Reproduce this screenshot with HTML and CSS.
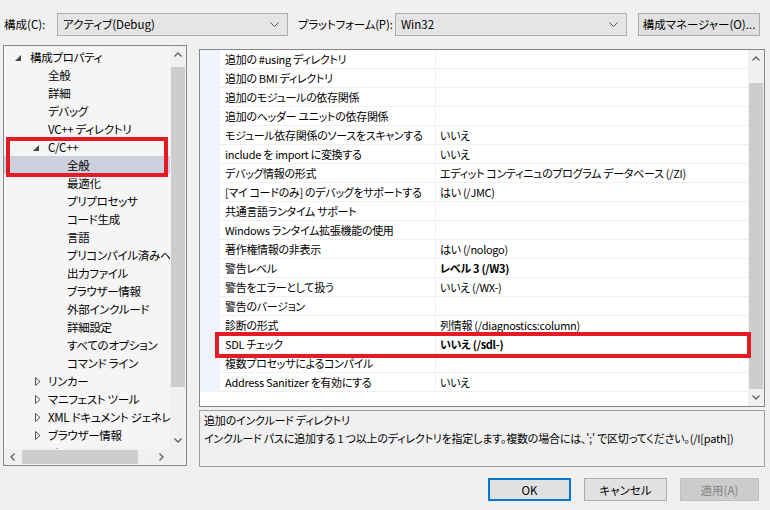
FILE: index.html
```html
<!DOCTYPE html>
<html lang="ja">
<head>
<meta charset="utf-8">
<link rel="stylesheet" href="styles.css">
</head>
<body>
<div class="dialog">
  <div class="topbar">
    <span class="lbl lbl-conf">構成(C):</span>
    <div class="combo combo-conf"><span>アクティブ(Debug)</span><svg class="chev" width="9" height="5" viewBox="0 0 9 5"><path d="M0.5 0.5 L4.5 4.5 L8.5 0.5" fill="none" stroke="#555" stroke-width="1"/></svg></div>
    <span class="lbl lbl-plat">プラットフォーム(P):</span>
    <div class="combo combo-plat"><span>Win32</span><svg class="chev" width="9" height="5" viewBox="0 0 9 5"><path d="M0.5 0.5 L4.5 4.5 L8.5 0.5" fill="none" stroke="#555" stroke-width="1"/></svg></div>
    <button class="btn btn-mgr">構成マネージャー(O)...</button>
  </div>

  <div class="main">
    <div class="tree">
      <div class="tree-body">
        <div class="ti l0"><svg class="exp" width="6" height="6" viewBox="0 0 6 6"><polygon points="6,0 6,6 0,6" fill="#444"/></svg>構成プロパティ</div>
        <div class="ti l1">全般</div>
        <div class="ti l1">詳細</div>
        <div class="ti l1">デバッグ</div>
        <div class="ti l1">VC++ ディレクトリ</div>
        <div class="ti l1"><svg class="exp" width="6" height="6" viewBox="0 0 6 6"><polygon points="6,0 6,6 0,6" fill="#444"/></svg>C/C++</div>
        <div class="ti l2 sel">全般</div>
        <div class="ti l2">最適化</div>
        <div class="ti l2">プリプロセッサ</div>
        <div class="ti l2">コード生成</div>
        <div class="ti l2">言語</div>
        <div class="ti l2">プリコンパイル済みヘッダー</div>
        <div class="ti l2">出力ファイル</div>
        <div class="ti l2">ブラウザー情報</div>
        <div class="ti l2">外部インクルード</div>
        <div class="ti l2">詳細設定</div>
        <div class="ti l2">すべてのオプション</div>
        <div class="ti l2">コマンド ライン</div>
        <div class="ti l1"><svg class="col" width="6" height="9" viewBox="0 0 6 9"><polygon points="0.5,0.5 5,4.5 0.5,8.5" fill="none" stroke="#555" stroke-width="1"/></svg>リンカー</div>
        <div class="ti l1"><svg class="col" width="6" height="9" viewBox="0 0 6 9"><polygon points="0.5,0.5 5,4.5 0.5,8.5" fill="none" stroke="#555" stroke-width="1"/></svg>マニフェスト ツール</div>
        <div class="ti l1"><svg class="col" width="6" height="9" viewBox="0 0 6 9"><polygon points="0.5,0.5 5,4.5 0.5,8.5" fill="none" stroke="#555" stroke-width="1"/></svg>XML ドキュメント ジェネレーター</div>
        <div class="ti l1"><svg class="col" width="6" height="9" viewBox="0 0 6 9"><polygon points="0.5,0.5 5,4.5 0.5,8.5" fill="none" stroke="#555" stroke-width="1"/></svg>ブラウザー情報</div>
        <div class="ti l1"><svg class="col" width="6" height="9" viewBox="0 0 6 9"><polygon points="0.5,0.5 5,4.5 0.5,8.5" fill="none" stroke="#555" stroke-width="1"/></svg>ビルド イベント</div>
      </div>
      <div class="vscroll">
        <div class="arrow"><svg width="8" height="5" viewBox="0 0 8 5"><path d="M0.5 4.5 L4 1 L7.5 4.5" fill="none" stroke="#606060" stroke-width="1.3"/></svg></div>
        <div class="track"><div class="thumb tree-vthumb"></div></div>
        <div class="arrow"><svg width="8" height="5" viewBox="0 0 8 5"><path d="M0.5 0.5 L4 4 L7.5 0.5" fill="none" stroke="#606060" stroke-width="1.3"/></svg></div>
      </div>
      <div class="hscroll">
        <div class="harrow"><svg width="5" height="8" viewBox="0 0 5 8"><path d="M4.5 0.5 L1 4 L4.5 7.5" fill="none" stroke="#606060" stroke-width="1.3"/></svg></div>
        <div class="htrack"><div class="hthumb"></div></div>
        <div class="harrow"><svg width="5" height="8" viewBox="0 0 5 8"><path d="M0.5 0.5 L4 4 L0.5 7.5" fill="none" stroke="#606060" stroke-width="1.3"/></svg></div>
      </div>
      <div class="corner"></div>
      <div class="hl hl-tree"></div>
    </div>

    <div class="rightcol">
      <div class="grid">
        <div class="rows">
          <div class="row"><div class="gut"></div><div class="name">追加の #using ディレクトリ</div><div class="val"></div></div>
          <div class="row"><div class="gut"></div><div class="name">追加の BMI ディレクトリ</div><div class="val"></div></div>
          <div class="row"><div class="gut"></div><div class="name">追加のモジュールの依存関係</div><div class="val"></div></div>
          <div class="row"><div class="gut"></div><div class="name">追加のヘッダー ユニットの依存関係</div><div class="val"></div></div>
          <div class="row"><div class="gut"></div><div class="name">モジュール依存関係のソースをスキャンする</div><div class="val">いいえ</div></div>
          <div class="row"><div class="gut"></div><div class="name">include を import に変換する</div><div class="val">いいえ</div></div>
          <div class="row"><div class="gut"></div><div class="name">デバッグ情報の形式</div><div class="val">エディット コンティニュのプログラム データベース (/ZI)</div></div>
          <div class="row"><div class="gut"></div><div class="name">[マイ コードのみ] のデバッグをサポートする</div><div class="val">はい (/JMC)</div></div>
          <div class="row"><div class="gut"></div><div class="name">共通言語ランタイム サポート</div><div class="val"></div></div>
          <div class="row"><div class="gut"></div><div class="name">Windows ランタイム拡張機能の使用</div><div class="val"></div></div>
          <div class="row"><div class="gut"></div><div class="name">著作権情報の非表示</div><div class="val">はい (/nologo)</div></div>
          <div class="row"><div class="gut"></div><div class="name">警告レベル</div><div class="val b">レベル 3 (/W3)</div></div>
          <div class="row"><div class="gut"></div><div class="name">警告をエラーとして扱う</div><div class="val">いいえ (/WX-)</div></div>
          <div class="row"><div class="gut"></div><div class="name">警告のバージョン</div><div class="val"></div></div>
          <div class="row"><div class="gut"></div><div class="name">診断の形式</div><div class="val">列情報 (/diagnostics:column)</div></div>
          <div class="row"><div class="gut"></div><div class="name">SDL チェック</div><div class="val b">いいえ (/sdl-)</div></div>
          <div class="row"><div class="gut"></div><div class="name">複数プロセッサによるコンパイル</div><div class="val"></div></div>
          <div class="row"><div class="gut"></div><div class="name">Address Sanitizer を有効にする</div><div class="val">いいえ</div></div>
        </div>
        <div class="vscroll gscroll">
          <div class="arrow"><svg width="8" height="5" viewBox="0 0 8 5"><path d="M0.5 4.5 L4 1 L7.5 4.5" fill="none" stroke="#606060" stroke-width="1.3"/></svg></div>
          <div class="track"><div class="thumb grid-vthumb"></div></div>
          <div class="arrow"><svg width="8" height="5" viewBox="0 0 8 5"><path d="M0.5 0.5 L4 4 L7.5 0.5" fill="none" stroke="#606060" stroke-width="1.3"/></svg></div>
        </div>
        <div class="hl hl-grid"></div>
      </div>
      <div class="desc">
        <div class="desc-title">追加のインクルード ディレクトリ</div>
        <div class="desc-text">インクルード パスに追加する 1 つ以上のディレクトリを指定します。複数の場合には、';' で区切ってください。(/I[path])</div>
      </div>
    </div>
  </div>

  <div class="buttons">
    <button class="btn btn-ok">OK</button>
    <button class="btn btn-cancel">キャンセル</button>
    <button class="btn btn-apply">適用(A)</button>
  </div>
</div>
</body>
</html>
```

FILE: styles.css
```css
* { box-sizing: border-box; }
html, body {
  margin: 0;
  padding: 0;
  background: #f0f0f0;
}
body {
  width: 770px;
  height: 510px;
  overflow: hidden;
  font-family: "Noto Sans CJK JP", "Noto Sans", sans-serif;
  font-size: 11px;
  font-feature-settings: "palt";
  color: #000;
}
.dialog {
  width: 770px;
  height: 510px;
  display: flex;
  flex-direction: column;
}

/* top bar */
.topbar {
  display: flex;
  align-items: center;
  margin-top: 12px;
  height: 24px;
  font-size: 11.5px;
}
.lbl { white-space: nowrap; }
.lbl-conf { margin-left: 4px; width: 53px; }
.lbl-plat { margin-left: 10px; width: 97px; letter-spacing: -0.2px; }
.combo {
  height: 23px;
  border: 1px solid #adadad;
  background: #e5e5e5;
  display: flex;
  align-items: center;
  justify-content: space-between;
  padding: 0 8px 0 5px;
}
.combo-conf { width: 231px; }
.combo-plat { width: 232px; }
.chev { display: block; }
.btn {
  font-family: inherit;
  font-size: 11.5px;
  font-feature-settings: "palt";
  color: #000;
  background: #e1e1e1;
  border: 1px solid #adadad;
  padding: 0;
  height: 23px;
}
.btn-mgr { margin-left: 11px; width: 122px; }

/* main */
.main {
  display: flex;
  align-items: flex-start;
  margin-top: 9px;
  height: 422px;
}

/* tree */
.tree {
  position: relative;
  margin-left: 3px;
  width: 184px;
  height: 421px;
  border: 1px solid #828790;
  background: #f5f5f5;
  display: grid;
  grid-template-columns: 166px 16px;
  grid-template-rows: 403px 16px;
  font-size: 11.5px;
  letter-spacing: -0.3px;
}
.tree-body {
  padding-top: 2px;
  overflow: hidden;
}
.ti {
  position: relative;
  height: 18px;
  line-height: 18px;
  white-space: nowrap;
  overflow: hidden;
}
.ti.l0 { padding-left: 26px; }
.ti.l1 { padding-left: 44px; }
.ti.l2 { padding-left: 63px; }
.ti.sel { background: #cdd1dd; }
.exp, .col {
  display: inline-block;
  vertical-align: middle;
}
.ti .exp { margin-left: -15px; margin-right: 9px; margin-top: -2px; }
.ti .col { margin-left: -13px; margin-right: 7px; margin-top: -2px; }

.vscroll {
  display: flex;
  flex-direction: column;
  background: #f0f0f0;
}
.arrow {
  height: 17px;
  display: flex;
  align-items: center;
  justify-content: center;
  flex: none;
}
.track { flex: 1; position: relative; }
.thumb {
  background: #cdcdcd;
  margin: 0 1px;
}
.tree-vthumb { margin-top: 4px; height: 320px; }

.hscroll {
  display: flex;
  align-items: stretch;
  background: #f0f0f0;
}
.harrow {
  width: 17px;
  display: flex;
  align-items: center;
  justify-content: center;
  flex: none;
}
.htrack { flex: 1; display: flex; align-items: center; }
.hthumb {
  margin-left: 1px;
  width: 116px;
  height: 14px;
  background: #cdcdcd;
}
.corner { background: #f0f0f0; }

.hl {
  position: absolute;
  border: 4px solid #e31b25;
  pointer-events: none;
}
.hl-tree { left: 2px; top: 91px; width: 162px; height: 40px; }

/* right column */
.rightcol {
  margin-left: 12px;
  width: 566px;
  margin-top: 4px;
  display: flex;
  flex-direction: column;
}
.grid {
  position: relative;
  height: 358px;
  border: 1px solid #828790;
  background: #fff;
  display: grid;
  grid-template-columns: 548px 16px;
}
.rows { overflow: hidden; letter-spacing: -0.3px; }
.row {
  display: grid;
  grid-template-columns: 20px 215px 1fr;
  height: 19px;
}
.gut { background: #f0f3f9; }
.name, .val {
  line-height: 18px;
  border-bottom: 1px solid #f0f0f0;
  white-space: nowrap;
  overflow: hidden;
}
.name { padding-left: 5px; }
.val { padding-left: 4px; border-left: 1px solid #f0f0f0; }
.val.b { font-weight: bold; }
.gscroll { background: #f0f0f0; }
.grid-vthumb { margin-top: 16px; height: 306px; }
.hl-grid { left: 15px; top: 282px; width: 536px; height: 26px; }

.desc {
  margin-top: 3px;
  height: 57px;
  border: 1px solid #a0a0a0;
  background: #f0f0f0;
  padding: 0 0 0 4px;
  line-height: 18px;
  white-space: nowrap;
  letter-spacing: -0.2px;
}

/* bottom buttons */
.buttons {
  display: flex;
  justify-content: flex-end;
  margin-top: 11px;
  padding-right: 11px;
  gap: 13px;
}
.btn-ok {
  width: 83px;
  border: 2px solid #0078d7;
}
.btn-cancel { width: 83px; }
.btn-apply {
  width: 79px;
  background: #cccccc;
  border-color: #bfbfbf;
  color: #838383;
}
```
